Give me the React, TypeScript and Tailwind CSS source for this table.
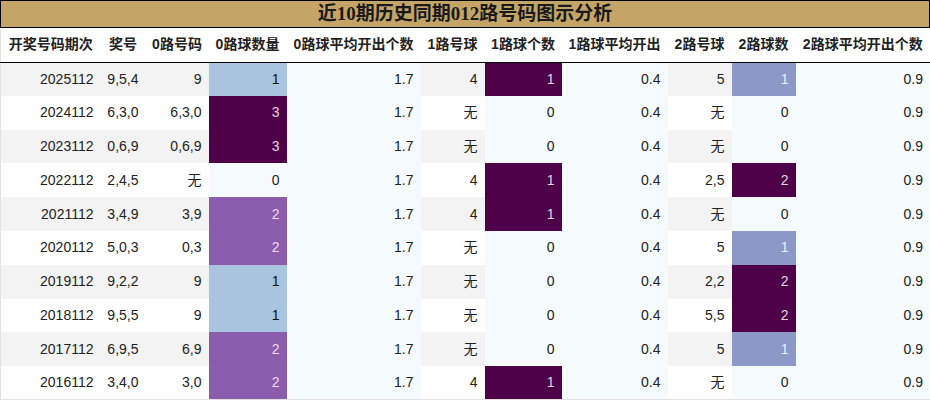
import React from 'react'

type Row = [string, string, string, number, string, string, number, string, string, number, string]

const rows: Row[] = [
    ['2025112', '9,5,4', '9', 1, '1.7', '4', 1, '0.4', '5', 1, '0.9'],
    ['2024112', '6,3,0', '6,3,0', 3, '1.7', '无', 0, '0.4', '无', 0, '0.9'],
    ['2023112', '0,6,9', '0,6,9', 3, '1.7', '无', 0, '0.4', '无', 0, '0.9'],
    ['2022112', '2,4,5', '无', 0, '1.7', '4', 1, '0.4', '2,5', 2, '0.9'],
    ['2021112', '3,4,9', '3,9', 2, '1.7', '4', 1, '0.4', '无', 0, '0.9'],
    ['2020112', '5,0,3', '0,3', 2, '1.7', '无', 0, '0.4', '5', 1, '0.9'],
    ['2019112', '9,2,2', '9', 1, '1.7', '无', 0, '0.4', '2,2', 2, '0.9'],
    ['2018112', '9,5,5', '9', 1, '1.7', '无', 0, '0.4', '5,5', 2, '0.9'],
    ['2017112', '6,9,5', '6,9', 2, '1.7', '无', 0, '0.4', '5', 1, '0.9'],
    ['2016112', '3,4,0', '3,0', 2, '1.7', '4', 1, '0.4', '无', 0, '0.9'],
]

const headers = ['开奖号码期次', '奖号', '0路号码', '0路球数量', '0路球平均开出个数', '1路号球', '1路球个数', '1路球平均开出', '2路号球', '2路球数', '2路球平均开出个数']
const widths = [100, 45, 63, 78, 134, 64, 77, 106, 64, 64, 135]

// colour for the count cells, per road
const zeroColor: Record<number, string> = {
    1: 'bg-[#a9c4df] text-[#111]',
    2: 'bg-[#8b5cab] text-[#eadcf2]',
    3: 'bg-[#4e0049] text-[#e6d4e4]',
}
const oneColor: Record<number, string> = {
    1: 'bg-[#4e0049] text-[#e6d4e4]',
}
const twoColor: Record<number, string> = {
    1: 'bg-[#8d97c8] text-[#eef0fa]',
    2: 'bg-[#4e0049] text-[#e6d4e4]',
}

export default function App() {
    return (
        <div className="w-[930px] h-[401px] overflow-hidden bg-white text-[#222]" style={{ fontFamily: '"Liberation Sans", "Noto Sans CJK SC", sans-serif' }}>
            <div className="h-[28px] bg-[#c5a567] border border-black flex items-center justify-center">
                <span className="text-[19px] font-bold text-[#1a1a1a] leading-none -mt-[1px]" style={{ fontFamily: '"Liberation Serif", "Noto Sans CJK SC", serif' }}>
                    近10期历史同期012路号码图示分析
                </span>
            </div>
            <table className="table-fixed border-collapse w-[930px] border-l border-r border-b border-[#e2e2e2]">
                <colgroup>
                    {widths.map((w, i) => <col key={i} style={{ width: w }} />)}
                </colgroup>
                <thead>
                    <tr className="h-[34px] border-b border-black">
                        {headers.map(h => (
                            <th key={h} className="text-center font-bold text-[14px] whitespace-nowrap p-0">{h}</th>
                        ))}
                    </tr>
                </thead>
                <tbody>
                    {rows.map((r, i) => {
                        const stripe = i % 2 === 0 ? 'bg-[#f3f3f3]' : 'bg-white'
                        const cyan = 'bg-[#f5fbfc]'
                        const cell = 'text-right pr-[7px] text-[14px] p-0'
                        return (
                            <tr key={r[0]} className="h-[33.8px]">
                                <td className={`${cell} ${stripe}`}>{r[0]}</td>
                                <td className={`${cell} ${stripe}`}>{r[1]}</td>
                                <td className={`${cell} ${stripe}`}>{r[2]}</td>
                                <td className={`${cell} ${zeroColor[r[3]] || cyan}`}>{r[3]}</td>
                                <td className={`${cell} ${cyan}`}>{r[4]}</td>
                                <td className={`${cell} ${stripe}`}>{r[5]}</td>
                                <td className={`${cell} ${oneColor[r[6]] || cyan}`}>{r[6]}</td>
                                <td className={`${cell} ${cyan}`}>{r[7]}</td>
                                <td className={`${cell} ${stripe}`}>{r[8]}</td>
                                <td className={`${cell} ${twoColor[r[9]] || cyan}`}>{r[9]}</td>
                                <td className={`${cell} ${cyan}`}>{r[10]}</td>
                            </tr>
                        )
                    })}
                </tbody>
            </table>
        </div>
    )
}
